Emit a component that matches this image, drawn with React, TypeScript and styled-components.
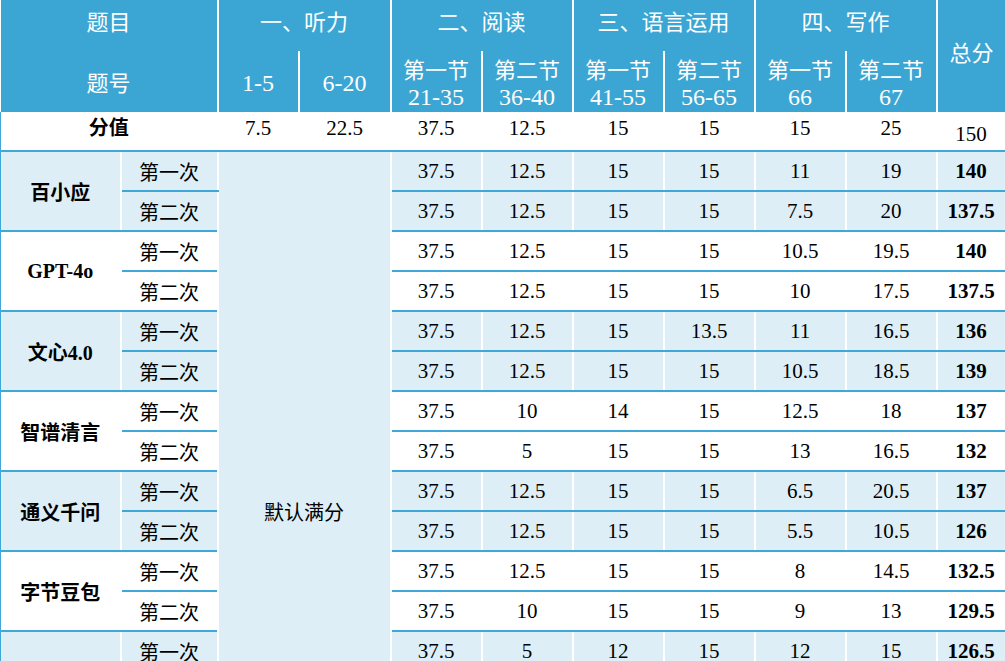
import styled, { createGlobalStyle } from "styled-components"

const HEAD = "#3ba6d4"
const LIGHT = "#ddeef6"
const LINE = "#3fa8d8"

const GlobalStyle = createGlobalStyle`
  body {
    margin: 0;
    background: #fff;
    font-family: "Liberation Serif", "Noto Sans CJK SC", serif;
  }
`

const Table = styled.table`
  width: 1005px;
  table-layout: fixed;
  border-collapse: collapse;
  color: #000;
`

const HeadRow = styled.tr<{ $h: number }>`
  height: ${(p) => p.$h}px;
`

const HeadCell = styled.th<{ $pt?: number; $pb?: number }>`
  background: ${HEAD};
  color: #fff;
  font-weight: normal;
  font-size: 22px;
  line-height: 27px;
  padding: ${(p) => p.$pt ?? 0}px 0 ${(p) => p.$pb ?? 0}px;
  text-align: center;
  vertical-align: middle;
  border-left: 2px solid #fff;
  border-top: none;
  border-bottom: none;
  &:first-child {
    border-left: none;
  }
`

const Range = styled.span`
  display: block;
  font-size: 24px;
`

const Line = styled.span`
  display: block;
`

const Cell = styled.td<{ $shade?: boolean; $bold?: boolean; $num?: boolean; $edge?: "left" | "right" }>`
  height: 38px;
  padding: 0;
  text-align: center;
  vertical-align: middle;
  white-space: nowrap;
  font-size: ${(p) => (p.$num ? 21 : 20)}px;
  font-weight: ${(p) => (p.$bold ? "bold" : "normal")};
  background: ${(p) => (p.$shade ? LIGHT : "#fff")};
  border-bottom: 2px solid ${LINE};
  border-left: ${(p) => (p.$edge === "left" ? `1px solid ${LINE}` : "2px solid #fff")};
  border-right: ${(p) => (p.$edge === "right" ? `2px solid ${LINE}` : "2px solid #fff")};
`

const ScoreCell = styled(Cell)<{ $low?: boolean }>`
  height: 33px;
  vertical-align: ${(p) => (p.$low ? "bottom" : "top")};
  padding: ${(p) => (p.$low ? "0 0 5px" : "5px 0 0")};
  line-height: 22px;
`

type Attempt = { label: string; scores: string[]; total: string }
type Model = { name: string; attempts: Attempt[] }

const sections = ["一、听力", "二、阅读", "三、语言运用", "四、写作"]

const parts = [
  { sub: "", range: "1-5" },
  { sub: "", range: "6-20" },
  { sub: "第一节", range: "21-35" },
  { sub: "第二节", range: "36-40" },
  { sub: "第一节", range: "41-55" },
  { sub: "第二节", range: "56-65" },
  { sub: "第一节", range: "66" },
  { sub: "第二节", range: "67" },
]

const fullMarks = ["7.5", "22.5", "37.5", "12.5", "15", "15", "15", "25"]

const blank = (label: string): Attempt => ({ label, scores: ["", "", "", "", "", ""], total: "" })

const models: Model[] = [
  {
    name: "百小应",
    attempts: [
      { label: "第一次", scores: ["37.5", "12.5", "15", "15", "11", "19"], total: "140" },
      { label: "第二次", scores: ["37.5", "12.5", "15", "15", "7.5", "20"], total: "137.5" },
    ],
  },
  {
    name: "GPT-4o",
    attempts: [
      { label: "第一次", scores: ["37.5", "12.5", "15", "15", "10.5", "19.5"], total: "140" },
      { label: "第二次", scores: ["37.5", "12.5", "15", "15", "10", "17.5"], total: "137.5" },
    ],
  },
  {
    name: "文心4.0",
    attempts: [
      { label: "第一次", scores: ["37.5", "12.5", "15", "13.5", "11", "16.5"], total: "136" },
      { label: "第二次", scores: ["37.5", "12.5", "15", "15", "10.5", "18.5"], total: "139" },
    ],
  },
  {
    name: "智谱清言",
    attempts: [
      { label: "第一次", scores: ["37.5", "10", "14", "15", "12.5", "18"], total: "137" },
      { label: "第二次", scores: ["37.5", "5", "15", "15", "13", "16.5"], total: "132" },
    ],
  },
  {
    name: "通义千问",
    attempts: [
      { label: "第一次", scores: ["37.5", "12.5", "15", "15", "6.5", "20.5"], total: "137" },
      { label: "第二次", scores: ["37.5", "12.5", "15", "15", "5.5", "10.5"], total: "126" },
    ],
  },
  {
    name: "字节豆包",
    attempts: [
      { label: "第一次", scores: ["37.5", "12.5", "15", "15", "8", "14.5"], total: "132.5" },
      { label: "第二次", scores: ["37.5", "10", "15", "15", "9", "13"], total: "129.5" },
    ],
  },
  {
    name: "",
    attempts: [
      { label: "第一次", scores: ["37.5", "5", "12", "15", "12", "15"], total: "126.5" },
      blank("第二次"),
    ],
  },
  { name: "", attempts: [blank("第一次"), blank("第二次")] },
  { name: "", attempts: [blank("第一次"), blank("第二次")] },
]

const rowCount = models.reduce((n, m) => n + m.attempts.length, 0)
const widths = [120, 97, 81, 92, 91, 91, 91, 91, 91, 91, 69]

export default function App() {
  return (
    <>
      <GlobalStyle />
      <Table>
        <colgroup>
          {widths.map((w, i) => (
            <col key={i} style={{ width: w }} />
          ))}
        </colgroup>
        <thead>
          <HeadRow $h={51}>
            <HeadCell colSpan={2} $pb={6}>题目</HeadCell>
            {sections.map((s) => (
              <HeadCell key={s} colSpan={2} $pb={6}>
                {s}
              </HeadCell>
            ))}
            <HeadCell rowSpan={2} $pb={6}>总分</HeadCell>
          </HeadRow>
          <HeadRow $h={61}>
            <HeadCell colSpan={2} $pt={4}>题号</HeadCell>
            {parts.map((p, i) => (
              <HeadCell key={i} $pt={4}>
                {p.sub && <Line>{p.sub}</Line>}
                <Range>{p.range}</Range>
              </HeadCell>
            ))}
          </HeadRow>
        </thead>
        <tbody>
          <tr>
            <ScoreCell colSpan={2} $bold $edge="left">分值</ScoreCell>
            {fullMarks.map((v, i) => (
              <ScoreCell key={i} $num>
                {v}
              </ScoreCell>
            ))}
            <ScoreCell $num $low $edge="right">150</ScoreCell>
          </tr>
          {models.map((m, gi) =>
            m.attempts.map((a, ai) => {
              const shade = gi % 2 === 0
              return (
                <tr key={`${gi}-${ai}`}>
                  {ai === 0 && (
                    <Cell rowSpan={m.attempts.length} $shade={shade} $bold $edge="left">
                      {m.name}
                    </Cell>
                  )}
                  <Cell $shade={shade}>{a.label}</Cell>
                  {gi === 0 && ai === 0 && (
                    <Cell colSpan={2} rowSpan={rowCount} $shade>
                      默认满分
                    </Cell>
                  )}
                  {a.scores.map((v, i) => (
                    <Cell key={i} $shade={shade} $num>
                      {v}
                    </Cell>
                  ))}
                  <Cell $shade={shade} $num $bold $edge="right">
                    {a.total}
                  </Cell>
                </tr>
              )
            })
          )}
        </tbody>
      </Table>
    </>
  )
}
